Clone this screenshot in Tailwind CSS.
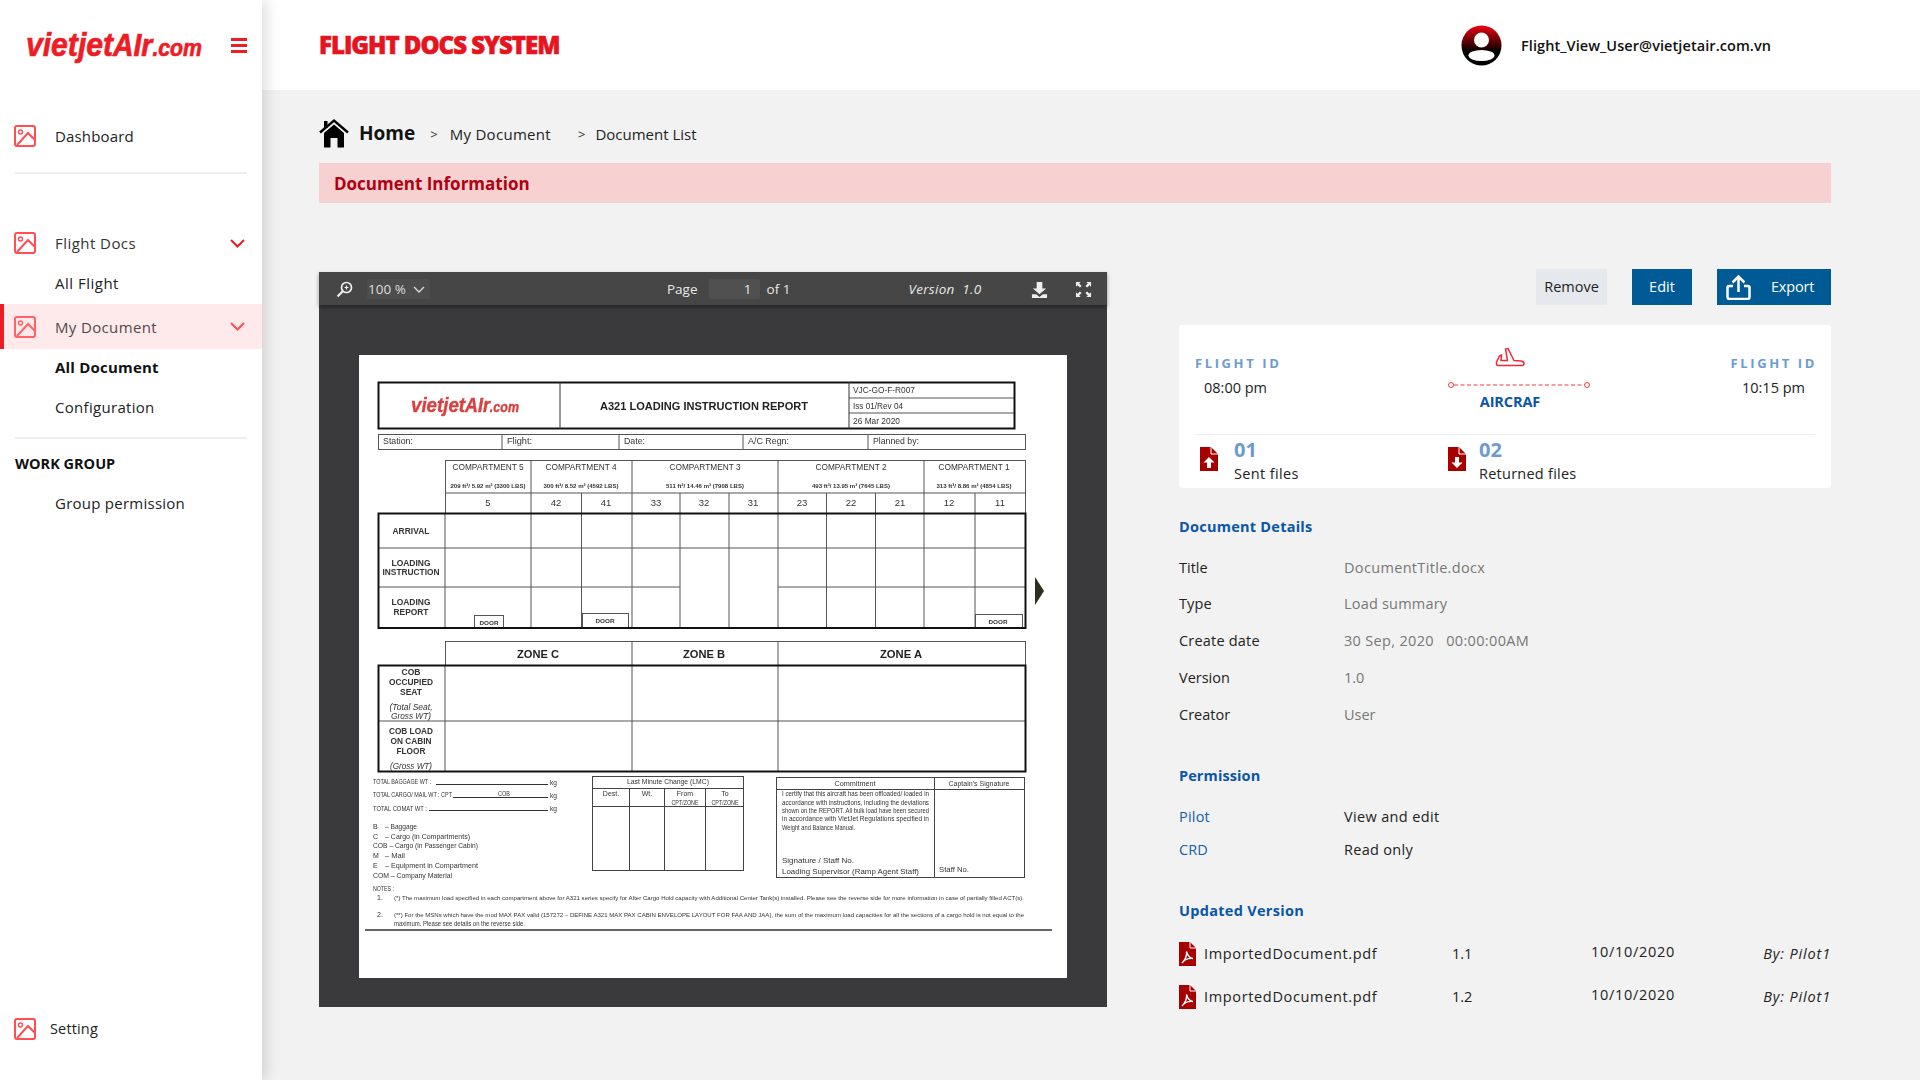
<!doctype html>
<html>
<head>
<meta charset="utf-8">
<script src="https://cdn.jsdelivr.net/npm/@tailwindcss/browser@4"></script>
</head>
<body class="m-0">
<div class="flex h-[1080px] w-[1920px] overflow-hidden bg-[#f2f2f2] font-['Open_Sans',sans-serif] text-[15px] text-[#222]">
  <!-- Sidebar -->
  <aside class="relative z-10 flex h-full w-[262px] shrink-0 flex-col bg-white shadow-[4px_0_14px_rgba(0,0,0,0.14)]">
    <div class="flex h-[90px] items-center">
      <svg width="184" height="52" viewBox="0 0 184 52" class="ml-[23px]">
        <text x="3" y="37" font-family="Liberation Sans" font-weight="700" font-style="italic" font-size="34" fill="#ee1c25" stroke="#ee1c25" stroke-width="0.7" textLength="176" lengthAdjust="spacingAndGlyphs">vietjet<tspan font-size="32">AIr</tspan><tspan font-size="24">.com</tspan></text>
      </svg>
      <div class="ml-[24px] flex w-[16px] flex-col gap-[3px]"><span class="h-[3px] bg-[#ee1c25]"></span><span class="h-[3px] bg-[#ee1c25]"></span><span class="h-[3px] bg-[#ee1c25]"></span></div>
    </div>
    <div class="mt-[24px] flex h-[44px] items-center pl-[14px]">
      <svg width="22" height="22" viewBox="0 0 22 22" fill="none" stroke="#ff4f55" stroke-width="2"><rect x="1" y="1" width="20" height="20" rx="2"/><circle cx="6.5" cy="7" r="2" stroke-width="1.5"/><path d="M3 20 L14 8 L21 15"/></svg>
      <span class="ml-[19px] tracking-[0.15px]">Dashboard</span>
    </div>
    <div class="ml-[15px] mt-[14px] h-[2px] w-[232px] bg-[#eeeeee]"></div>
    <div class="mt-[49px] flex h-[40px] items-center pl-[14px] text-[#333]">
      <svg width="22" height="22" viewBox="0 0 22 22" fill="none" stroke="#ff4f55" stroke-width="2"><rect x="1" y="1" width="20" height="20" rx="2"/><circle cx="6.5" cy="7" r="2" stroke-width="1.5"/><path d="M3 20 L14 8 L21 15"/></svg>
      <span class="ml-[19px] tracking-[0.45px]">Flight Docs</span>
      <svg class="ml-auto mr-[17px]" width="15" height="9" viewBox="0 0 15 9" fill="none" stroke="#ee1c25" stroke-width="2"><path d="M1 1 L7.500 7.500 L14 1"/></svg>
    </div>
    <div class="flex h-[40px] items-center pl-[55px] tracking-[0.5px]">All Flight</div>
    <div class="mt-[1px] flex h-[45px] items-center border-l-[4px] border-[#ee1c25] bg-[#feeaea] pl-[10px] text-[#55474a]">
      <svg width="22" height="22" viewBox="0 0 22 22" fill="none" stroke="#ff6268" stroke-width="2"><rect x="1" y="1" width="20" height="20" rx="2"/><circle cx="6.5" cy="7" r="2" stroke-width="1.5"/><path d="M3 20 L14 8 L21 15"/></svg>
      <span class="ml-[19px] mt-[1px] tracking-[0.35px]">My Document</span>
      <svg class="ml-auto mr-[17px]" width="15" height="9" viewBox="0 0 15 9" fill="none" stroke="#ff4f55" stroke-width="2"><path d="M1 1 L7.500 7.500 L14 1"/></svg>
    </div>
    <div class="flex h-[36px] items-center pl-[55px] font-bold tracking-[0.2px] text-[#111]">All Document</div>
    <div class="mt-[2px] flex h-[40px] items-center pl-[55px] tracking-[0.3px]">Configuration</div>
    <div class="ml-[15px] mt-[10px] h-[2px] w-[232px] bg-[#eeeeee]"></div>
    <div class="mt-[9px] flex h-[32px] items-center pl-[15px] text-[14.5px] font-bold text-[#111]">WORK GROUP</div>
    <div class="mt-[3px] flex h-[40px] items-center pl-[55px] tracking-[0.25px]">Group permission</div>
    <div class="mb-[29px] mt-auto flex h-[44px] items-center pl-[14px] text-[14.5px] tracking-[0.15px]">
      <svg width="22" height="22" viewBox="0 0 22 22" fill="none" stroke="#ff4f55" stroke-width="2"><rect x="1" y="1" width="20" height="20" rx="2"/><circle cx="6.5" cy="7" r="2" stroke-width="1.5"/><path d="M3 20 L14 8 L21 15"/></svg>
      <span class="ml-[14px]">Setting</span>
    </div>
  </aside>

  <div class="flex min-w-0 flex-1 flex-col">
    <!-- Header -->
    <header class="flex h-[90px] items-center bg-white pl-[57px]">
      <span class="w-[1141px] text-[24px] font-extrabold tracking-[-1px] text-[#e5141e] [-webkit-text-stroke:0.6px_#e5141e]">FLIGHT DOCS SYSTEM</span>
      <svg class="ml-[1px]" width="41" height="41" viewBox="0 0 41 41"><defs><linearGradient id="av" x1="0" y1="0" x2="0" y2="1"><stop offset="0" stop-color="#f00010"/><stop offset="0.65" stop-color="#000"/></linearGradient></defs><circle cx="20.5" cy="20.5" r="20" fill="url(#av)"/><circle cx="20.5" cy="15" r="7.5" fill="#fff"/><ellipse cx="20.5" cy="30.500" rx="13" ry="5.5" fill="#fff"/></svg>
      <span class="ml-[19px] mt-[1px] text-[14.5px] font-semibold tracking-[0.08px] text-[#111]">Flight_View_User@vietjetair.com.vn</span>
    </header>

    <main class="flex-1 pl-[57px] pr-[89px]">
      <div class="flex h-[73px] items-center pt-[14px]">
        <svg class="-mt-[1px]" width="30" height="30" viewBox="0 0 30 30"><path d="M1 14.5 L15 2.5 L29 14.5" fill="none" stroke="#000" stroke-width="2.4"/><path d="M5 15 L15 6.5 L25 15 V29.5 H18.5 V20 H11.5 V29.5 H5 Z" fill="#000"/><rect x="5" y="3" width="3.5" height="7" fill="#000"/></svg>
        <span class="ml-[10px] text-[19px] font-bold text-[#111]">Home</span>
        <span class="ml-[15px] mt-[2px] text-[13px] text-[#333]">&gt;</span>
        <span class="ml-[12px] mt-[2px] tracking-[0.3px]">My Document</span>
        <span class="ml-[27px] mt-[2px] text-[13px] text-[#333]">&gt;</span>
        <span class="ml-[10px] mt-[2px]">Document List</span>
      </div>
      <div class="flex h-[40px] items-center bg-[#f7d1d1] pl-[15px] pt-[1px] text-[17px] font-bold text-[#b10010]">Document Information</div>

      <div class="mt-[66px] flex">
        <!-- Viewer -->
        <div class="mt-[3px] flex h-[735px] w-[788px] shrink-0 flex-col bg-[#3a393b]">
          <div class="flex h-[33px] items-center bg-[#464646] pt-[1px] text-[13.5px] text-[#e8e8e8] shadow-[0_2px_4px_rgba(0,0,0,0.4)]">
            <svg class="ml-[17px]" width="17" height="17" viewBox="0 0 17 17" fill="none" stroke="#eee" stroke-width="1.7"><circle cx="10.5" cy="6.5" r="5"/><path d="M7 10 L1.5 15.5" stroke-width="2.2"/><path d="M8.5 6.5 H12.5 M10.5 4.5 V8.5" stroke-width="1.2"/></svg>
            <div class="ml-[14px] flex h-[20px] w-[63px] items-center justify-between rounded-[2px] bg-[#4d4d4d] px-[1px] text-[#ddd]">
              <span>100 %</span>
              <svg class="mr-[4px]" width="12" height="7" viewBox="0 0 12 7" fill="none" stroke="#ddd" stroke-width="1.3"><path d="M1 1 L6 6 L11 1"/></svg>
            </div>
            <span class="ml-[237px]">Page</span>
            <div class="ml-[11px] flex h-[20px] w-[51px] items-center justify-end rounded-[2px] bg-[#505050] pr-[8px]">1</div>
            <span class="ml-[7px]">of 1</span>
            <span class="ml-[118px] italic tracking-[0.3px]">Version &nbsp;1.0</span>
            <svg class="ml-[50px]" width="17" height="17" viewBox="0 0 18 18" fill="#eee"><path d="M6 1 H12 V8 H16 L9 14 L2 8 H6 Z"/><path d="M1 14 H5.5 L9 17 L12.5 14 H17 V18 H1 Z"/></svg>
            <svg class="ml-[27px]" width="17" height="17" viewBox="0 0 18 18" fill="#eee"><path d="M1 1 H6 L4.4 2.6 L7 5.2 L5.2 7 L2.6 4.4 L1 6 Z"/><path d="M17 1 V6 L15.4 4.4 L12.8 7 L11 5.2 L13.6 2.6 L12 1 Z"/><path d="M1 17 V12 L2.6 13.6 L5.2 11 L7 12.8 L4.4 15.4 L6 17 Z"/><path d="M17 17 H12 L13.6 15.4 L11 12.8 L12.8 11 L15.4 13.6 L17 12 Z"/></svg>
          </div>
          <!-- Scanned page -->
          <div class="ml-[40px] mt-[50px] h-[623px] w-[708px] bg-white">
            <svg class="block blur-[0.3px]" width="708" height="623" viewBox="359 355 708 623" font-family="Liberation Sans" fill="#333">
              <g fill="none" stroke="#555" stroke-width="1">
                <path d="M849 398 H1015 M849 413 H1015"/>
                <rect x="378.5" y="434.5" width="647" height="15"/><path d="M502 434 V449 M619 434 V449 M743 434 V449 M868 434 V449"/>
                <rect x="445.5" y="460.5" width="580" height="53"/><path d="M445 493 H1025 M531 460 V513 M632 460 V513 M778 460 V513 M924 460 V513 M581.5 493 V513 M680 493 V513 M729 493 V513 M826.5 493 V513 M875.5 493 V513 M975 493 V513"/>
                <path d="M378 548 H1026 M378 587 H680 M778 587 H1026 M445 513 V628 M531 513 V628 M581.5 513 V628 M632 513 V628 M680 513 V628 M729 513 V628 M778 513 V628 M826.5 513 V628 M875.5 513 V628 M924 513 V628 M975 513 V628"/>
                <rect x="474.5" y="615.5" width="29" height="12"/><rect x="582.5" y="613.5" width="46" height="14"/><rect x="975.5" y="614.5" width="47" height="13"/>
                <rect x="445.5" y="641.5" width="580" height="24"/><path d="M632 641 V772 M778 641 V772 M445 665 V772 M378 721 H1026"/>
              </g>
              <rect x="378.5" y="382.5" width="636" height="46" fill="none" stroke="#111" stroke-width="2"/>
              <path d="M560 382 V429 M849 382 V429" stroke="#333" stroke-width="1" fill="none"/>
              <rect x="378.5" y="513.5" width="647" height="114.500" fill="none" stroke="#111" stroke-width="2"/>
              <rect x="378.5" y="665.500" width="647" height="106" fill="none" stroke="#111" stroke-width="2"/>
              <text x="411" y="412" font-weight="700" font-style="italic" fill="#d9403f" stroke="#d9403f" stroke-width="0.4" font-size="21" textLength="108" lengthAdjust="spacingAndGlyphs">vietjet<tspan font-size="20">AIr</tspan><tspan font-size="14">.com</tspan></text>
              <text x="600" y="410" font-size="10.500" font-weight="700" fill="#222" textLength="208" lengthAdjust="spacingAndGlyphs">A321 LOADING INSTRUCTION REPORT</text>
              <g font-size="9">
                <text x="853" y="393" textLength="62" lengthAdjust="spacingAndGlyphs">VJC-GO-F-R007</text>
                <text x="853" y="409" textLength="50" lengthAdjust="spacingAndGlyphs">Iss 01/Rev 04</text>
                <text x="853" y="424" textLength="47" lengthAdjust="spacingAndGlyphs">26 Mar 2020</text>
                <text x="383" y="444" textLength="30" lengthAdjust="spacingAndGlyphs">Station:</text>
                <text x="507" y="444" textLength="25" lengthAdjust="spacingAndGlyphs">Flight:</text>
                <text x="624" y="444" textLength="21" lengthAdjust="spacingAndGlyphs">Date:</text>
                <text x="748" y="444" textLength="41" lengthAdjust="spacingAndGlyphs">A/C Regn:</text>
                <text x="873" y="444" textLength="46" lengthAdjust="spacingAndGlyphs">Planned by:</text>
              </g>
              <g font-size="9.500" text-anchor="middle">
                <text x="488" y="470" textLength="71" lengthAdjust="spacingAndGlyphs">COMPARTMENT 5</text>
                <text x="581" y="470" textLength="71" lengthAdjust="spacingAndGlyphs">COMPARTMENT 4</text>
                <text x="705" y="470" textLength="71" lengthAdjust="spacingAndGlyphs">COMPARTMENT 3</text>
                <text x="851" y="470" textLength="71" lengthAdjust="spacingAndGlyphs">COMPARTMENT 2</text>
                <text x="974" y="470" textLength="71" lengthAdjust="spacingAndGlyphs">COMPARTMENT 1</text>
              </g>
              <g font-size="6" text-anchor="middle" font-weight="700">
                <text x="488" y="488" textLength="75" lengthAdjust="spacingAndGlyphs">209 ft³/ 5.92 m³ (3300 LBS)</text>
                <text x="581" y="488" textLength="75" lengthAdjust="spacingAndGlyphs">300 ft³/ 8.52 m³ (4592 LBS)</text>
                <text x="705" y="488" textLength="78" lengthAdjust="spacingAndGlyphs">511 ft³/ 14.46 m³ (7908 LBS)</text>
                <text x="851" y="488" textLength="78" lengthAdjust="spacingAndGlyphs">493 ft³/ 13.95 m³ (7645 LBS)</text>
                <text x="974" y="488" textLength="75" lengthAdjust="spacingAndGlyphs">313 ft³/ 8.86 m³ (4854 LBS)</text>
              </g>
              <g font-size="9.500" text-anchor="middle">
                <text x="488" y="506">5</text><text x="556" y="506">42</text><text x="606" y="506">41</text><text x="656" y="506">33</text><text x="704" y="506">32</text><text x="753" y="506">31</text><text x="802" y="506">23</text><text x="851" y="506">22</text><text x="900" y="506">21</text><text x="949" y="506">12</text><text x="1000" y="506">11</text>
              </g>
              <g font-size="9.500" text-anchor="middle" font-weight="700" fill="#333">
                <text x="411" y="534" textLength="37" lengthAdjust="spacingAndGlyphs">ARRIVAL</text>
                <text x="411" y="566" textLength="39" lengthAdjust="spacingAndGlyphs">LOADING</text>
                <text x="411" y="575" textLength="57" lengthAdjust="spacingAndGlyphs">INSTRUCTION</text>
                <text x="411" y="605" textLength="39" lengthAdjust="spacingAndGlyphs">LOADING</text>
                <text x="411" y="615" textLength="35" lengthAdjust="spacingAndGlyphs">REPORT</text>
                <text x="411" y="675" textLength="19" lengthAdjust="spacingAndGlyphs">COB</text>
                <text x="411" y="685" textLength="44" lengthAdjust="spacingAndGlyphs">OCCUPIED</text>
                <text x="411" y="695" textLength="22" lengthAdjust="spacingAndGlyphs">SEAT</text>
                <text x="411" y="734" textLength="44" lengthAdjust="spacingAndGlyphs">COB LOAD</text>
                <text x="411" y="744" textLength="41" lengthAdjust="spacingAndGlyphs">ON CABIN</text>
                <text x="411" y="754" textLength="29" lengthAdjust="spacingAndGlyphs">FLOOR</text>
              </g>
              <g font-size="9.500" text-anchor="middle" font-style="italic">
                <text x="411" y="710" textLength="43" lengthAdjust="spacingAndGlyphs">(Total Seat,</text>
                <text x="411" y="719" textLength="40" lengthAdjust="spacingAndGlyphs">Gross WT)</text>
                <text x="411" y="769" textLength="42" lengthAdjust="spacingAndGlyphs">(Gross WT)</text>
              </g>
              <g font-size="6" text-anchor="middle" font-weight="700">
                <text x="489" y="625" textLength="19" lengthAdjust="spacingAndGlyphs">DOOR</text>
                <text x="605" y="623" textLength="19" lengthAdjust="spacingAndGlyphs">DOOR</text>
                <text x="998" y="624" textLength="19" lengthAdjust="spacingAndGlyphs">DOOR</text>
              </g>
              <g font-size="11" font-weight="700" text-anchor="middle" fill="#222">
                <text x="538" y="658" textLength="42" lengthAdjust="spacingAndGlyphs">ZONE C</text>
                <text x="704" y="658" textLength="42" lengthAdjust="spacingAndGlyphs">ZONE B</text>
                <text x="901" y="658" textLength="42" lengthAdjust="spacingAndGlyphs">ZONE A</text>
              </g>
              <path d="M1035 577 L1044 591 L1035 605 Z" fill="#2f2f1f"/>
              <path d="M436 784.500 H548 M453 797.500 H548 M429 810.500 H548" stroke="#333" fill="none"/>
              <g font-size="7">
                <text x="373" y="784" textLength="58" lengthAdjust="spacingAndGlyphs">TOTAL BAGGAGE WT :</text>
                <text x="373" y="797" textLength="79" lengthAdjust="spacingAndGlyphs">TOTAL CARGO/ MAIL WT : CPT</text>
                <text x="498" y="796" textLength="12" lengthAdjust="spacingAndGlyphs">COB</text>
                <text x="373" y="811" textLength="54" lengthAdjust="spacingAndGlyphs">TOTAL COMAT WT :</text>
                <text x="550" y="785" textLength="7" lengthAdjust="spacingAndGlyphs">kg</text>
                <text x="550" y="798" textLength="7" lengthAdjust="spacingAndGlyphs">kg</text>
                <text x="550" y="811" textLength="7" lengthAdjust="spacingAndGlyphs">kg</text>
                <text x="373" y="829">B</text><text x="385" y="829" textLength="32" lengthAdjust="spacingAndGlyphs">– Baggage</text>
                <text x="373" y="838.500">C</text><text x="385" y="838.500" textLength="85" lengthAdjust="spacingAndGlyphs">– Cargo (in Compartments)</text>
                <text x="373" y="848" textLength="105" lengthAdjust="spacingAndGlyphs">COB – Cargo (in Passenger Cabin)</text>
                <text x="373" y="858">M</text><text x="385" y="858" textLength="20" lengthAdjust="spacingAndGlyphs">– Mail</text>
                <text x="373" y="868">E</text><text x="385" y="868" textLength="93" lengthAdjust="spacingAndGlyphs">– Equipment in Compartment</text>
                <text x="373" y="878" textLength="79" lengthAdjust="spacingAndGlyphs">COM – Company Material</text>
                <text x="373" y="891" textLength="21" lengthAdjust="spacingAndGlyphs">NOTES :</text>
                <text x="377" y="900">1.</text>
                <text x="394" y="900" font-size="5.500" textLength="630" lengthAdjust="spacingAndGlyphs">(*) The maximum load specified in each compartment above for A321 series specify for After Cargo Hold capacity with Additional Center Tank(s) installed.  Please see the reverse side for more information in case of partially filled ACT(s).</text>
                <text x="377" y="917">2.</text>
                <text x="394" y="917" font-size="5.500" textLength="630" lengthAdjust="spacingAndGlyphs">(**) For the MSNs which have the mod MAX PAX valid (157272 – DEFINE A321 MAX PAX CABIN ENVELOPE LAYOUT FOR FAA AND JAA), the sum of the maximum load capacities for all the sections of a cargo hold is not equal to the</text>
                <text x="394" y="926" textLength="131" lengthAdjust="spacingAndGlyphs">maximum. Please see details on the reverse side.</text>
              </g>
              <path d="M365 930 H1052" stroke="#333" stroke-width="1.4"/>
              <g fill="none" stroke="#444"><rect x="592.500" y="776.500" width="151" height="94"/><path d="M592 788.500 H744 M592 806.500 H744 M629.500 788 V871 M664.500 788 V871 M705.500 788 V871"/>
              <rect x="776.500" y="777.500" width="248" height="100"/><path d="M776 789.500 H1025 M934.500 777 V878"/></g>
              <g font-size="7">
                <g text-anchor="middle">
                  <text x="668" y="784" textLength="82" lengthAdjust="spacingAndGlyphs">Last Minute Change (LMC)</text>
                  <text x="611" y="796">Dest.</text><text x="647" y="796">Wt.</text><text x="685" y="796">From</text><text x="725" y="796">To</text>
                  <text x="685" y="805" textLength="27" lengthAdjust="spacingAndGlyphs">CPT/ZONE</text><text x="725" y="805" textLength="27" lengthAdjust="spacingAndGlyphs">CPT/ZONE</text>
                  <text x="855" y="786" textLength="41" lengthAdjust="spacingAndGlyphs">Commitment</text>
                  <text x="979" y="786" textLength="61" lengthAdjust="spacingAndGlyphs">Captain's Signature</text>
                </g>
                <text x="782" y="796" textLength="147" lengthAdjust="spacingAndGlyphs">I certify that this aircraft has been offloaded/ loaded in</text>
                <text x="782" y="804.500" textLength="147" lengthAdjust="spacingAndGlyphs">accordance with instructions, including the deviations</text>
                <text x="782" y="813" textLength="147" lengthAdjust="spacingAndGlyphs">shown on the REPORT. All bulk load have been secured</text>
                <text x="782" y="821" textLength="147" lengthAdjust="spacingAndGlyphs">in accordance with VietJet Regulations specified in</text>
                <text x="782" y="830" textLength="73" lengthAdjust="spacingAndGlyphs">Weight and Balance Manual.</text>
                <text x="782" y="863" font-size="8" textLength="72" lengthAdjust="spacingAndGlyphs">Signature / Staff No.</text>
                <text x="782" y="874" font-size="8" textLength="137" lengthAdjust="spacingAndGlyphs">Loading Supervisor (Ramp Agent Staff)</text>
                <text x="939" y="872" font-size="8" textLength="30" lengthAdjust="spacingAndGlyphs">Staff No.</text>
              </g>
            </svg>
          </div>
        </div>

        <!-- Right column -->
        <div class="ml-[72px] w-[652px] shrink-0">
          <div class="flex h-[36px] justify-end text-[14.5px]">
            <button class="h-[36px] w-[71px] bg-[#e5e9ed] text-[#222]">Remove</button>
            <button class="ml-[25px] h-[36px] w-[60px] bg-[#005a96] text-white">Edit</button>
            <button class="ml-[25px] flex h-[36px] w-[114px] items-center bg-[#005a96] pl-[9px] text-white">
              <svg width="25" height="25" viewBox="0 0 25 25" fill="none" stroke="#fff" stroke-width="2.5"><path d="M12.5 17 V2 M6.500 7.500 L12.5 1.500 L18.500 7.500"/><path d="M7 11 H3 Q1.500 11 1.500 12.500 V22 Q1.500 24 3.500 24 H21.500 Q23.500 24 23.500 22 V12.500 Q23.500 11 22 11 H18"/></svg>
              <span class="ml-[20px] tracking-[-0.2px]">Export</span>
            </button>
          </div>
          <div class="mt-[20px] h-[163px] rounded-[3px] bg-white px-[16px]">
            <div class="relative flex h-[110px] justify-between border-b-[1px] border-[#eeeeee] pt-[25px]">
              <div class="w-[110px]">
                <div class="text-[13px] font-bold leading-[26px] tracking-[2.6px] text-[#6c9bd2]">FLIGHT ID</div>
                <div class="ml-[9px] mt-[-1px] text-[14.500px] leading-[26px]">08:00 pm</div>
              </div>
              <div class="-mt-[3px] flex w-[144px] flex-col items-center">
                <svg class="mr-[19px]" width="30" height="20" viewBox="0 0 30 20" fill="none" stroke="#ee2a35" stroke-width="1.5"><path d="M3 18.500 H27 Q29 18.500 29 16.500 Q29 14.500 26 14 L19 13.500 L13 1.500 L10.500 2 L12.500 13.500 L6 13.500 L6.500 8 L4.500 9 L1.500 15 Q1 18.500 3 18.500 Z"/></svg>
                <svg class="ml-[-1px] mt-[14px]" width="144" height="8" viewBox="0 0 144 8" fill="none" stroke="#ee3a45"><circle cx="4" cy="4" r="2.500"/><circle cx="140" cy="4" r="2.500"/><path d="M7 4 H137" stroke-dasharray="4 2.500"/></svg>
                <div class="mr-[19px] mt-[1px] text-[14.500px] font-bold leading-[24px] tracking-[-0.1px] text-[#0b55a8]">AIRCRAF</div>
              </div>
              <div class="mr-[-2px] flex w-[83px] flex-col items-end">
                <div class="text-[13px] font-bold leading-[26px] tracking-[2.6px] text-[#6c9bd2] whitespace-nowrap">FLIGHT ID</div>
                <div class="mr-[12px] mt-[-1px] text-[14.500px] leading-[26px] whitespace-nowrap">10:15 pm</div>
              </div>
            </div>
            <div class="flex">
              <div class="flex w-[253px] items-start">
                <svg class="ml-[5px] mt-[12px]" width="18" height="24" viewBox="0 0 18 24"><path d="M0 0 H11 L18 7 V24 H0 Z" fill="#a60000"/><path d="M11 0 V7 H18" fill="none" stroke="#fff"/><path d="M9 10 L14.500 15.500 H11 V21 H7 V15.500 H3.500 Z" fill="#fff"/></svg>
                <div class="ml-[16px]"><div class="mt-[2px] text-[20px] font-bold leading-[26px] text-[#6c9bd2]">01</div><div class="mt-[-1px] text-[14.500px] leading-[24px] tracking-[0.35px]">Sent files</div></div>
              </div>
              <div class="flex items-start">
                <svg class="mt-[12px]" width="18" height="24" viewBox="0 0 18 24"><path d="M0 0 H11 L18 7 V24 H0 Z" fill="#a60000"/><path d="M11 0 V7 H18" fill="none" stroke="#fff"/><path d="M9 21 L14.500 15.500 H11 V10 H7 V15.500 H3.500 Z" fill="#fff"/></svg>
                <div class="ml-[13px]"><div class="mt-[2px] text-[20px] font-bold leading-[26px] text-[#6c9bd2]">02</div><div class="mt-[-1px] text-[14.500px] leading-[24px] tracking-[0.25px]">Returned files</div></div>
              </div>
            </div>
          </div>

          <div class="mt-[25px] flex h-[28px] items-center text-[14.500px] font-bold tracking-[0.25px] text-[#0b55a8]">Document Details</div>
          <div class="mt-[8px] text-[14.500px]">
            <div class="flex h-[36.75px] items-center"><span class="w-[165px]">Title</span><span class="tracking-[0.33px] text-[#777]">DocumentTitle.docx</span></div>
            <div class="flex h-[36.75px] items-center"><span class="w-[165px] tracking-[0.1px]">Type</span><span class="tracking-[0.2px] text-[#777]">Load summary</span></div>
            <div class="flex h-[36.75px] items-center"><span class="w-[165px] tracking-[0.2px]">Create date</span><span class="tracking-[0.33px] text-[#777]">30 Sep, 2020 &nbsp;&nbsp;00:00:00AM</span></div>
            <div class="flex h-[36.75px] items-center"><span class="w-[165px]">Version</span><span class="text-[#777]">1.0</span></div>
            <div class="flex h-[36.75px] items-center"><span class="w-[165px]">Creator</span><span class="text-[#777]">User</span></div>
          </div>
          <div class="mt-[29px] flex h-[28px] items-center text-[14.500px] font-bold tracking-[0.1px] text-[#0b55a8]">Permission</div>
          <div class="mt-[11px] text-[14.500px]">
            <div class="flex h-[33px] items-center"><span class="w-[165px] tracking-[0.2px] text-[#1560a8]">Pilot</span><span class="tracking-[0.35px]">View and edit</span></div>
            <div class="flex h-[33px] items-center"><span class="w-[165px] tracking-[0.1px] text-[#1560a8]">CRD</span><span class="tracking-[0.3px]">Read only</span></div>
          </div>
          <div class="mt-[30px] flex h-[28px] items-center text-[14.500px] font-bold tracking-[0.3px] text-[#0b55a8]">Updated Version</div>
          <div class="mt-[8px] text-[14.500px]">
            <div class="flex h-[43px] items-center">
              <svg width="17" height="24" viewBox="0 0 17 24"><path d="M0 0 H11 L17 6 V24 H0 Z" fill="#a60000"/><path d="M11 0 V6 H17" fill="none" stroke="#fff"/><path d="M3 21 C6 18 8 13 7.500 9.500 C8.500 13 10.500 16 14 16.500 C10 16 6 17 3 21 Z" fill="none" stroke="#fff" stroke-width="1.3"/></svg>
              <span class="ml-[8px] w-[248px] tracking-[0.65px]">ImportedDocument.pdf</span>
              <span class="w-[139px]">1.1</span>
              <span class="-mt-[4px] w-[140px] tracking-[0.7px]">10/10/2020</span>
              <span class="-mt-[1px] ml-auto italic tracking-[0.85px]">By: Pilot1</span>
            </div>
            <div class="flex h-[43px] items-center">
              <svg width="17" height="24" viewBox="0 0 17 24"><path d="M0 0 H11 L17 6 V24 H0 Z" fill="#a60000"/><path d="M11 0 V6 H17" fill="none" stroke="#fff"/><path d="M3 21 C6 18 8 13 7.500 9.500 C8.500 13 10.500 16 14 16.500 C10 16 6 17 3 21 Z" fill="none" stroke="#fff" stroke-width="1.3"/></svg>
              <span class="ml-[8px] w-[248px] tracking-[0.65px]">ImportedDocument.pdf</span>
              <span class="w-[139px]">1.2</span>
              <span class="-mt-[4px] w-[140px] tracking-[0.7px]">10/10/2020</span>
              <span class="-mt-[1px] ml-auto italic tracking-[0.85px]">By: Pilot1</span>
            </div>
          </div>
        </div>
      </div>
    </main>
  </div>
</div>
</body>
</html>
